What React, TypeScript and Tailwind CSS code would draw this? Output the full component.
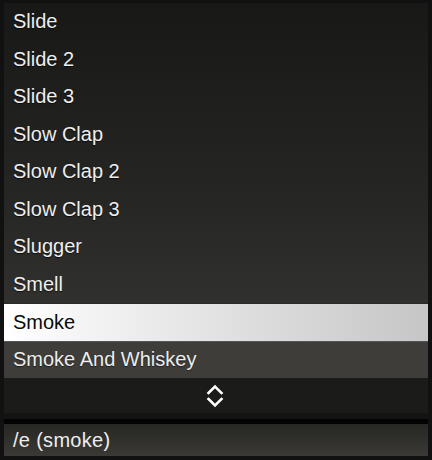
import React from "react";

const items = [
  "Slide",
  "Slide 2",
  "Slide 3",
  "Slow Clap",
  "Slow Clap 2",
  "Slow Clap 3",
  "Slugger",
  "Smell",
  "Smoke",
  "Smoke And Whiskey",
];

export default function App() {
  return (
    <div
      className="w-[432px] h-[460px] bg-[#111111] pt-[3px] pb-[4px] pl-[4px] pr-[4px] flex flex-col"
      style={{ fontFamily: '"Liberation Sans", Arial, sans-serif' }}
    >
      <div className="flex flex-col bg-gradient-to-b from-[#181817] via-[#252523] to-[#393835]">
        {items.map((it) => {
          const sel = it === "Smoke";
          const last = it === "Smoke And Whiskey";
          return (
            <div
              key={it}
              className={
                "h-[37.5px] flex items-center pl-[9px] pb-[1px] text-[20px] " +
                (sel
                  ? "bg-gradient-to-r from-[#ffffff] to-[#c6c6c6] text-[#0a0a0a] border-t border-[#2a2a28]"
                  : last
                  ? "bg-[#3e3d39] text-[#ededed] border-t border-[#555] [text-shadow:0_1px_1px_rgba(0,0,0,0.5)]"
                  : "text-[#eeeeee] [text-shadow:0_1px_1px_rgba(0,0,0,0.7)]")
              }
            >
              {it}
            </div>
          );
        })}
      </div>
      <div className="h-[35px] bg-[#1b1b19] flex items-center justify-center pr-[2px]">
        <svg width="18" height="26" viewBox="0 0 18 26" fill="none">
          <path d="M2.5 10 L9 3.5 L15.5 10" stroke="#ffffff" strokeWidth="2.6" strokeLinecap="square" />
          <path d="M2.5 16 L9 22.5 L15.5 16" stroke="#ffffff" strokeWidth="2.6" strokeLinecap="square" />
        </svg>
      </div>
      <div className="h-[6px] bg-[#141413]" />
      <div className="h-[5px] bg-[#030303]" />
      <div className="flex-1 bg-gradient-to-b from-[#272724] to-[#3a3935] flex items-center pl-[9px] text-[20px] text-[#eeeeee] tracking-[0.3px]">
        /e (smoke)
      </div>
    </div>
  );
}
